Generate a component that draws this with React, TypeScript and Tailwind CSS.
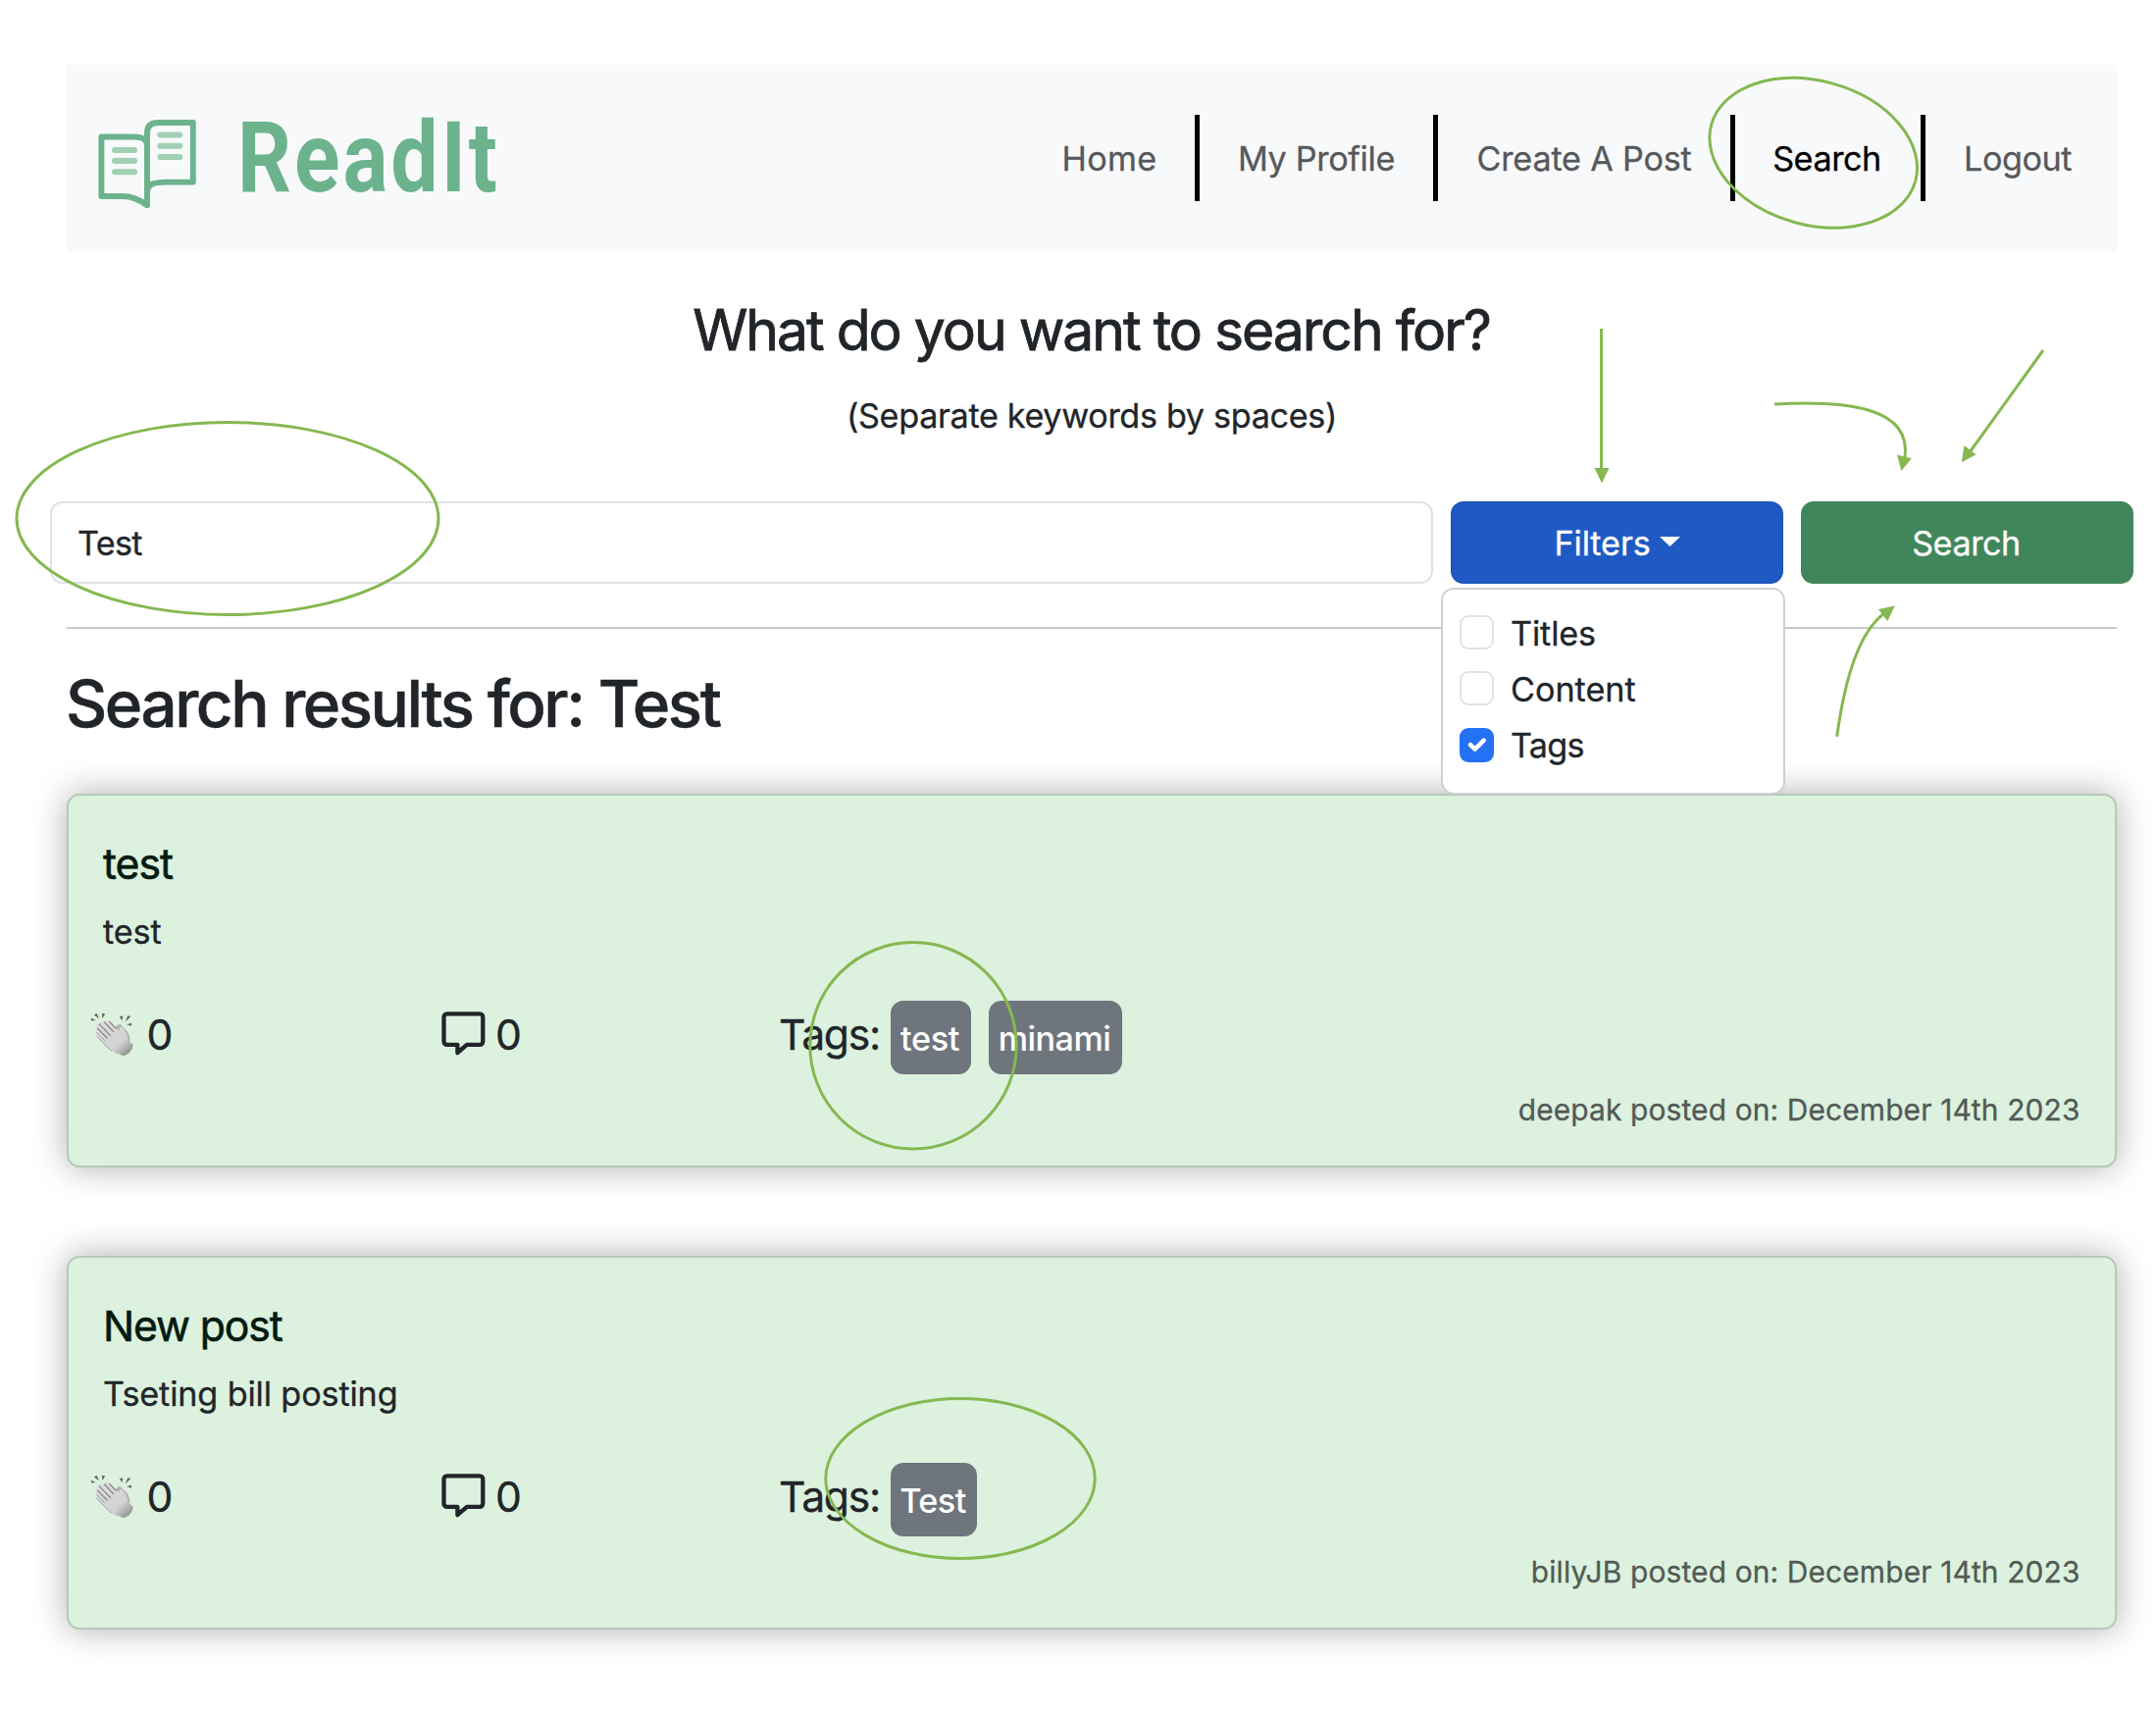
import clsx from "clsx";

function BookLogo() {
  return (
    <svg width="101" height="94" viewBox="0 0 101 94" fill="none" className="mt-3 shrink-0">
      <g stroke="#6cb38d" strokeWidth="5.9" strokeLinejoin="round" strokeLinecap="round">
        <path d="M50 28V89.3C43 84 36 80 25 80H3.4V19.5H36C45 19.5 50 21.5 50 29" />
        <path d="M50 29V15C50 8.5 54 5 62 5H96.8V65.6H69C56 65.6 50 68 50 76" />
      </g>
      <g stroke="#a0d0b3" strokeWidth="6" strokeLinecap="round">
        <path d="M17 33H37M17 44H37M17 55.2H37" />
        <path d="M63.3 17.6H83.3M63.3 28.8H83.3M63.3 40H83.3" />
      </g>
    </svg>
  );
}

function ClapIcon() {
  return (
    <svg width="45" height="45" viewBox="0 0 45 45" className="shrink-0">
      <defs>
        <linearGradient id="skin" x1="8" y1="8" x2="40" y2="42" gradientUnits="userSpaceOnUse">
          <stop offset="0" stopColor="#dedede" />
          <stop offset="0.7" stopColor="#d2d2d2" />
          <stop offset="1" stopColor="#8f8f8f" />
        </linearGradient>
      </defs>
      <g fill="#666">
        <path d="M.8 5.6 5.6 8 1.2 8.4ZM3.8 2.6 6.6.8 9 6.2ZM12 .8 15.2 1.4 12.2 6.2Z" />
        <path d="M29.8 4 33.4 3.6 32.4 8.2ZM38.2 3.2 41.4 4 35.8 9.4ZM42 10.8V13.8L37 12.2Z" />
      </g>
      <path
        d="M24 15.5 29 12.2Q31 11.6 32.2 13.4L38 19.5Q40.3 24 40.6 28.5L30 42.5 26 41.4 12 30Z"
        fill="#b3b3b3"
      />
      <path
        d="M6.2 23.6Q4.4 21 6.4 20 4.6 17 6.6 15.6 5.4 11.6 9 11.6 11 7.6 14.2 9.4 16.6 6 20 8.8L29.4 18.8Q29.6 14 32.2 14.8 37.4 19.6 38.8 28.4L43.8 32.8Q42.4 41 35.4 43.8 31.6 44.4 29.4 42 21 40.6 16.8 34.8Z"
        fill="url(#skin)"
      />
      <path
        d="M14.4 9.8 23.6 19.6M9.2 11.8 20.6 23.6M7.4 16.2 17.2 26M19.6 9.4 26 16.2"
        stroke="#7d7d7d"
        strokeWidth="1.1"
        strokeLinecap="round"
      />
      <path d="M6.4 20 15 29M6.2 23.8 16.6 34.6Q19 37.4 22 39" stroke="#a2a2a2" strokeWidth="1" fill="none" />
    </svg>
  );
}

function CommentIcon() {
  return (
    <svg width="45" height="45" viewBox="0 0 45 45" fill="none" className="shrink-0">
      <path
        d="M5.8 2.4H39A3.3 3.3 0 0 1 42.3 5.7V30.6A3.3 3.3 0 0 1 39 33.9H26L16.4 42V33.9H5.8A3.3 3.3 0 0 1 2.5 30.6V5.7A3.3 3.3 0 0 1 5.8 2.4Z"
        stroke="#212529"
        strokeWidth="4.3"
        strokeLinejoin="round"
      />
    </svg>
  );
}

const navItems = [
  { label: "Home", box: "w-[174px] tracking-[0.25px]" },
  { label: "My Profile", box: "w-[238px] tracking-[-0.35px]" },
  { label: "Create A Post", box: "w-[298px] tracking-[-0.21px]" },
  { label: "Search", box: "w-[187px] pr-[2px] tracking-[-0.45px]", active: true },
  { label: "Logout", box: "w-[188px] pr-[4px] tracking-[-0.48px]" },
];

function Header() {
  return (
    <header className="flex h-[190px] items-center bg-[#f8f9fb] pr-[3px] pl-8">
      <BookLogo />
      <span className="ml-[40.6px] origin-left scale-x-[0.86] font-[Roboto,sans-serif] text-[100px] leading-[100px] font-bold tracking-[3.4px] whitespace-nowrap text-[#6cb38d] [-webkit-text-stroke:0px]">
        ReadIt
      </span>
      <nav className="ml-auto flex items-center">
        {navItems.map((item, i) => (
          <a
            key={item.label}
            className={clsx(
              "box-content flex h-[86px] items-center justify-center pt-[2px] whitespace-nowrap",
              item.box,
              item.active ? "text-black" : "text-[#575859]",
              i < navItems.length - 1 && "border-r-[5px] border-black",
            )}
          >
            {item.label}
          </a>
        ))}
      </nav>
    </header>
  );
}

const filters = [
  { label: "Titles", checked: false, tracking: "tracking-[-0.13px]" },
  { label: "Content", checked: false, tracking: "tracking-[-0.03px]" },
  { label: "Tags", checked: true, tracking: "tracking-[-0.74px]" },
];

function FilterMenu() {
  return (
    <div className="absolute top-[88px] -left-[10px] z-10 flex h-[211px] w-[351px] flex-col gap-[22.3px] rounded-[13px] border-2 border-[#cfd0d1] bg-white bg-clip-padding pt-[26px] pl-[17px] text-[#212529]">
      {filters.map((f) => (
        <label key={f.label} className="flex h-[35px] items-center gap-[17px]">
          <span
            className={clsx(
              "flex size-[35px] items-center justify-center rounded-[9px]",
              f.checked ? "bg-[#2571f4]" : "border-2 border-[#dee2e6] bg-white",
            )}
          >
            {f.checked && (
              <svg width="35" height="35" viewBox="0 0 20 20" fill="none">
                <path
                  d="m6 10 3 3 6-6"
                  stroke="#fff"
                  strokeWidth="3"
                  strokeLinecap="round"
                  strokeLinejoin="round"
                  transform="translate(1.2 1.2) scale(.86)"
                />
              </svg>
            )}
          </span>
          <span className={clsx("pt-[2px]", f.tracking)}>{f.label}</span>
        </label>
      ))}
    </div>
  );
}

function SearchBar() {
  return (
    <div className="mt-[61px] -ml-[17px] flex h-[84px] w-[2124px] gap-[18px]">
      <div className="flex w-[1410px] items-center rounded-[13px] border-2 border-[#dee2e6] bg-white pt-[2px] pl-[26px] tracking-[-0.7px]">
        Test
      </div>
      <div className="relative w-[339px]">
        <button className="flex h-full w-full items-center justify-center gap-[9px] rounded-[13px] border-2 border-[#1c56ba] bg-[#1f5ac4] text-white">
          <span className="pt-[2px] tracking-[-0.1px]">Filters</span>
          <svg width="21" height="10" viewBox="0 0 21 10" fill="#fff" className="-mt-0.5">
            <path d="M0 0H21L10.5 10Z" />
          </svg>
        </button>
        <FilterMenu />
      </div>
      <button className="flex w-[339px] items-center justify-center rounded-[13px] bg-[#41865a] pt-[2px] pr-[2px] tracking-[-0.45px] text-white">
        Search
      </button>
    </div>
  );
}

const posts = [
  {
    title: "test",
    titleTracking: "tracking-[-1px]",
    body: "test",
    tags: [
      { label: "test", box: "w-[82px] tracking-[-0.4px]" },
      { label: "minami", box: "w-[136px] tracking-[-0.56px]" },
    ],
    footer: "deepak posted on: December 14th 2023",
  },
  {
    title: "New post",
    titleTracking: "tracking-[-1.1px]",
    body: "Tseting bill posting",
    tags: [{ label: "Test", box: "w-[88px] tracking-[-0.6px]" }],
    footer: "billyJB posted on: December 14th 2023",
  },
];

function PostCard({ post }: { post: (typeof posts)[number] }) {
  return (
    <article className="h-[381px] rounded-[13px] border-2 border-[#b5c8b8] bg-[#dcf1de] pt-[42px] shadow-[0_0_35px_rgba(0,0,0,0.32)]">
      <h3
        className={clsx(
          "pl-[35px] text-[42.7px] leading-[56px] font-normal text-[#051b11] [-webkit-text-stroke:0.6px]",
          post.titleTracking,
        )}
      >
        {post.title}
      </h3>
      <p className="mt-4 pl-[35px] leading-[50px] tracking-[-0.14px]">{post.body}</p>
      <div className="mt-[45px] grid h-[75px] grid-cols-[358px_344px_1fr] pl-[22px] text-[42.7px]">
        <div className="flex h-[69px] items-center gap-[12.5px]">
          <ClapIcon />
          <span className="pt-[2px]">0</span>
        </div>
        <div className="flex h-[69px] items-center gap-[10px]">
          <div className="-mt-[3px]">
            <CommentIcon />
          </div>
          <span className="pt-[2px]">0</span>
        </div>
        <div className="flex">
          <span className="flex h-[69px] w-[114px] items-center pt-[2px] tracking-[-1.28px]">Tags:</span>
          <div className="flex gap-[18px] text-[34.2px] font-medium text-white [-webkit-text-stroke:0px]">
            {post.tags.map((tag) => (
              <span
                key={tag.label}
                className={clsx(
                  "flex h-[75px] items-center justify-center rounded-[13px] bg-[#6e757d] pt-[2px] pr-[2px]",
                  tag.box,
                )}
              >
                {tag.label}
              </span>
            ))}
          </div>
        </div>
      </div>
      <p className="mt-[13.5px] pr-[35.5px] text-right text-[29.9px] leading-[44px] tracking-[0.14px] text-[#535a56]">
        {post.footer}
      </p>
    </article>
  );
}

/* Hand-placed callouts drawn over the page: rings and arrows. */
function Callouts() {
  return (
    <svg
      width="2198"
      height="1746"
      viewBox="0 0 2198 1746"
      fill="none"
      stroke="#85b851"
      strokeWidth="3"
      className="pointer-events-none absolute top-0 left-0 z-20"
    >
      <ellipse cx="1848.7" cy="155.8" rx="107.9" ry="73.3" transform="rotate(15.5 1848.7 155.8)" />
      <ellipse cx="232" cy="528.5" rx="215" ry="98" />
      <circle cx="931" cy="1065.8" r="105.2" />
      <ellipse cx="979" cy="1507" rx="137.2" ry="81.5" />
      <path d="M1632.5 335V478" />
      <path d="M1809 412C1880 408 1949 414 1942 466" />
      <path d="M2083 357 2008 461" />
      <path d="M1872.7 750.7C1881 690 1895 645 1920 626" />
      <g fill="#85b851" stroke="none">
        <path d="M1625.5 477H1640.5L1633 492.5Z" />
        <path d="M1934 463.5 1948.8 467.2 1938.4 480Z" />
        <path d="M2002.5 454 2014.6 463.3 1999.8 471.3Z" />
        <path d="M1915 621 1924.3 633 1931.8 617.6Z" />
      </g>
    </svg>
  );
}

export default function App() {
  return (
    <div className="relative h-[1746px] w-[2198px] overflow-hidden bg-white px-[68px] pt-[66px] font-[Inter,sans-serif] text-[34.2px] text-[#212529] [-webkit-text-stroke:0.3px]">
      <div className="w-[2090px]">
        <Header />
        <h2 className="mt-[46px] pr-[1px] text-center text-[57px] leading-[70px] font-normal tracking-[-2px] [-webkit-text-stroke:0.8px]">
          What do you want to search for?
        </h2>
        <p className="mt-[26px] text-center leading-[52px] tracking-[-0.34px]">(Separate keywords by spaces)</p>
        <SearchBar />
        <hr className="mt-[44px] h-[2px] border-0 bg-[#c8c9ca]" />
        <h1 className="mt-[37px] -ml-px text-[65.5px] leading-[80px] font-medium tracking-[-2.46px] [-webkit-text-stroke:0.5px]">
          Search results for: Test
        </h1>
        <div className="mt-[51px] flex flex-col gap-[90px]">
          {posts.map((post) => (
            <PostCard key={post.title} post={post} />
          ))}
        </div>
      </div>
      <Callouts />
    </div>
  );
}
